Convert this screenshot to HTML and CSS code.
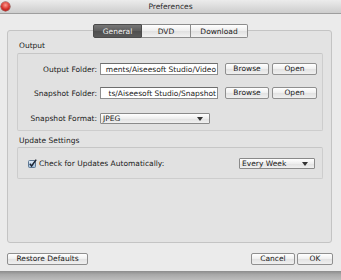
FILE: index.html
```html
<!DOCTYPE html>
<html lang="en">
<head>
  <meta charset="UTF-8">
  <title>Preferences</title>
  <link rel="stylesheet" href="styles.css">
</head>
<body>
  <div class="window">

    <!-- Title bar -->
    <div class="titlebar">
      <span class="close"></span>
      <span class="title">Preferences</span>
    </div>

    <div class="content">
      <!-- Tabs -->
      <div class="tabs">
        <span class="tab general active">General</span>
        <span class="tab dvd">DVD</span>
        <span class="tab download">Download</span>
      </div>

      <div class="panel">
        <div class="group-title">Output</div>
        <div class="group output">
          <div class="row">
            <span class="label">Output Folder:</span>
            <div class="field"><span>ments/Aiseesoft Studio/Video</span></div>
            <button class="btn browse">Browse</button>
            <button class="btn open">Open</button>
          </div>
          <div class="row">
            <span class="label">Snapshot Folder:</span>
            <div class="field"><span>ts/Aiseesoft Studio/Snapshot</span></div>
            <button class="btn browse">Browse</button>
            <button class="btn open">Open</button>
          </div>
          <div class="row format">
            <span class="label">Snapshot Format:</span>
            <div class="select format-select">
              <span>JPEG</span>
              <svg width="6" height="4" viewBox="0 0 6 4"><path d="M0 0h6L3 4z" fill="#333"/></svg>
            </div>
          </div>
        </div>

        <div class="group-title update-title">Update Settings</div>
        <div class="group update">
          <label class="check">
            <svg width="9" height="9" viewBox="0 0 9 9">
              <defs>
                <linearGradient id="cb" x1="0" y1="0" x2="0" y2="1">
                  <stop offset="0" stop-color="#e4eef8"/>
                  <stop offset="1" stop-color="#9bbbd9"/>
                </linearGradient>
              </defs>
              <rect x="0.5" y="1.5" width="7" height="7" rx="1" fill="url(#cb)" stroke="#5e7894"/>
              <path d="M1.8 4.8 L3.6 7 L8.2 0.6" fill="none" stroke="#1b2433" stroke-width="1.5"/>
            </svg>
            <span>Check for Updates Automatically:</span>
          </label>
          <div class="select week-select">
            <span>Every Week</span>
            <svg width="6" height="4" viewBox="0 0 6 4"><path d="M0 0h6L3 4z" fill="#333"/></svg>
          </div>
        </div>
      </div>

      <!-- Footer buttons -->
      <div class="footer">
        <button class="btn restore">Restore Defaults</button>
        <span class="spacer"></span>
        <button class="btn cancel">Cancel</button>
        <button class="btn ok">OK</button>
      </div>
    </div>

    <div class="bottom-edge"></div>
  </div>
</body>
</html>
```

FILE: styles.css
```css
/* Reset */
* {
  margin: 0;
  padding: 0;
  box-sizing: border-box;
}

body, html {
  width: 341px;
  height: 280px;
  overflow: hidden;
  background: #ebebeb;
  font-family: "DejaVu Sans", sans-serif;
  font-size: 7.5px;
  color: #1a1a1a;
}

.window {
  display: flex;
  flex-direction: column;
  height: 280px;
}

/* Title bar */
.titlebar {
  height: 14px;
  display: flex;
  align-items: center;
  background: linear-gradient(180deg, #ececec, #cdcdcd);
  border-bottom: 1px solid #9e9e9e;
}

.close {
  width: 9px;
  height: 9px;
  margin-left: 1px;
  border-radius: 50%;
  background: radial-gradient(circle at 50% 35%, #ff9c90, #d4302a 55%, #8e1410);
  box-shadow: 0 0 0 0.5px #7a2a26;
}

.title {
  flex: 1;
  text-align: center;
  margin-right: 10px;
  color: #2a2a2a;
}

/* Content area */
.content {
  flex: 1;
  display: flex;
  flex-direction: column;
  padding: 10px 9px 0 7px;
}

/* Tabs */
.tabs {
  display: flex;
  justify-content: center;
  margin-bottom: -8px;
  position: relative;
  z-index: 1;
  margin-left: 2px;
}

.tab {
  height: 14px;
  display: flex;
  align-items: center;
  justify-content: center;
  border: 1px solid #8c8c8c;
  border-left: none;
  background: linear-gradient(180deg, #ffffff, #ededed 50%, #e0e0e0 51%, #f2f2f2);
  color: #222;
}

.tab.general {
  width: 49px;
  border-left: 1px solid #8c8c8c;
  border-radius: 2px 0 0 2px;
}

.tab.dvd { width: 49px; }

.tab.download {
  width: 57px;
  border-radius: 0 2px 2px 0;
}

.tab.active {
  background: linear-gradient(180deg, #777777, #5c5c5c 50%, #4e4e4e 51%, #5a5a5a);
  border-color: #4a4a4a;
  color: #f4f4f4;
}

/* Main panel */
.panel {
  flex: 1;
  border: 1px solid #c4c4c4;
  border-radius: 3px;
  background: #e3e3e3;
  padding: 10px 8px 0 9px;
}

.group-title {
  line-height: 10px;
  padding-left: 2px;
  margin-bottom: 2px;
}

.update-title {
  margin-top: 5px;
  margin-bottom: 1px;
}

.group {
  border: 1px solid #cdcdcd;
  border-top-color: #c6c6c6;
  border-radius: 2px;
  background: #e1e1e1;
}

/* Output group rows */
.output {
  display: flex;
  flex-direction: column;
  row-gap: 12px;
  padding: 9px 4px 6px 0;
}

.row {
  display: flex;
  align-items: center;
  height: 12px;
}

.row.format {
  height: 11px;
  margin-top: 2px;
}

.label {
  width: 79px;
  text-align: right;
  margin-right: 3px;
  white-space: nowrap;
}

.field {
  width: 118px;
  height: 12px;
  display: flex;
  align-items: center;
  justify-content: flex-end;
  overflow: hidden;
  background: #ffffff;
  border: 1px solid #8e8e8e;
  border-top-color: #6e6e6e;
  padding-right: 1px;
  white-space: nowrap;
  margin-right: 7px;
}

/* Buttons */
.btn {
  height: 12px;
  font-family: inherit;
  font-size: 7.5px;
  color: #1a1a1a;
  border: 1px solid #8f8f8f;
  border-radius: 2px;
  background: linear-gradient(180deg, #ffffff, #efefef 50%, #e2e2e2 51%, #f0f0f0);
  line-height: 10px;
}

.btn.browse { width: 44px; margin-right: 3px; }
.btn.open { width: 45px; }

/* Select boxes */
.select {
  height: 11px;
  display: flex;
  align-items: center;
  justify-content: space-between;
  padding: 0 6px 0 2px;
  border: 1px solid #8a8a8a;
  border-radius: 1px;
  background: linear-gradient(180deg, #ffffff, #eeeeee 50%, #e1e1e1 51%, #f0f0f0);
}

.format-select { width: 110px; }
.week-select { width: 76px; }

/* Update group */
.update {
  display: flex;
  align-items: center;
  justify-content: space-between;
  padding: 10px 7px 9px 10px;
}

.check {
  display: flex;
  align-items: center;
  column-gap: 2px;
}

.check svg {
  display: block;
}

/* Footer */
.footer {
  display: flex;
  align-items: center;
  margin: 10px -1px 6px 0;
}

.spacer { flex: 1; }

.btn.restore { width: 81px; }
.btn.cancel { width: 44px; margin-right: 2px; }
.btn.ok { width: 36px; }

.bottom-edge {
  height: 9px;
  background: linear-gradient(180deg, #8c8c8c, #a9a9a9 40%, #bdbdbd);
}
```
